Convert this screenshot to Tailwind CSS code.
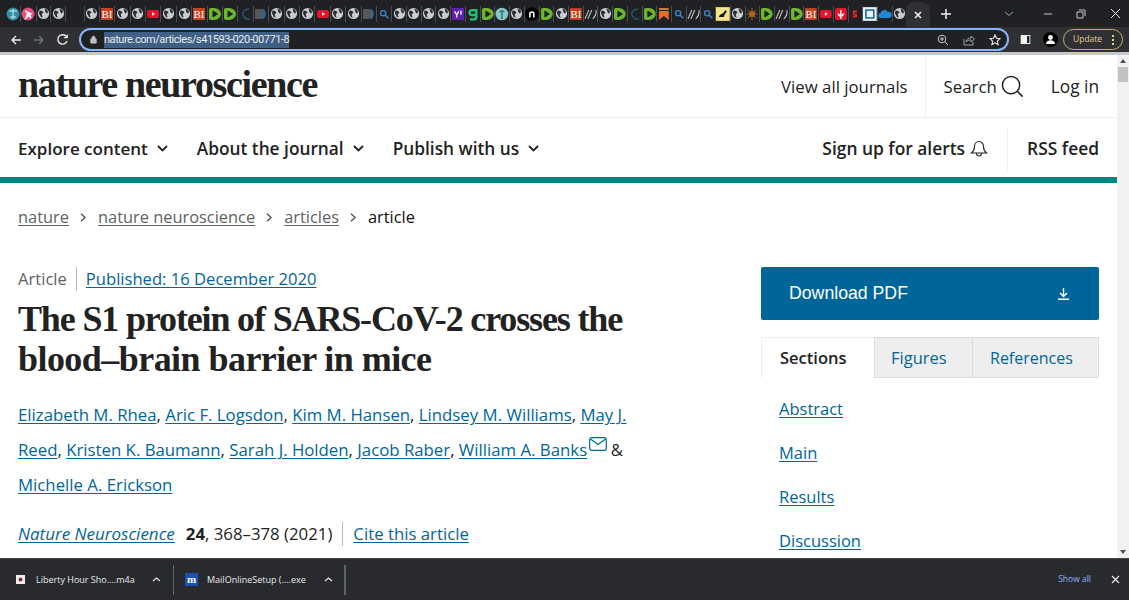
<!DOCTYPE html>
<html lang="en">
<head>
<meta charset="UTF-8" />
<title>The S1 protein of SARS-CoV-2 crosses the blood-brain barrier in mice</title>
<script src="https://cdn.jsdelivr.net/npm/@tailwindcss/browser@4"></script>
</head>
<body class="h-[600px] w-[1129px] overflow-hidden bg-white font-['Open_Sans',sans-serif] text-[#222]">
<!-- icon sprites -->
<svg class="hidden">
	<symbol id="g" viewBox="0 0 14 14"><circle cx="7" cy="7" r="6" fill="#c9ccd0"/><path d="M3 3.5l3 1 1 2-2 1 1 4-2-1-2-4zM8 2l3 1 1 3-2 1-1-2z" fill="#2a2c30"/></symbol>
	<symbol id="bi" viewBox="0 0 14 14"><rect x="1" y="1" width="12" height="12" fill="#c8431f"/><text x="7" y="11" text-anchor="middle" font-family="Liberation Serif" font-size="11" fill="#fff">BI</text></symbol>
	<symbol id="yt" viewBox="0 0 14 14"><rect x="1" y="3" width="12" height="8" rx="2" fill="#e8132a"/><path d="M6 5.2l3 1.8-3 1.8z" fill="#fff"/></symbol>
	<symbol id="play" viewBox="0 0 14 14"><path d="M1 3a2 2 0 012-2h3a7 6 0 010 12H3a2 2 0 01-2-2z" fill="#6cb52d"/><path d="M5 4l4.500 3L5 10z" fill="#1f2023" stroke="#1f2023"/></symbol>
	<symbol id="ph" viewBox="0 0 14 14"><path d="M10 2C6 2 3 5 4 8s4 5 7 4" fill="none" stroke="#1c5a70" stroke-width="1.500"/></symbol>
	<symbol id="d" viewBox="0 0 14 14"><path d="M1 2h5a5 5 0 010 10H1z" fill="#55585c"/><path d="M8 1.500c5 1 5 10 0 11 2-3 2-8 0-11z" fill="#2b6aa0"/></symbol>
	<symbol id="s" viewBox="0 0 14 14"><circle cx="6" cy="6" r="3" fill="none" stroke="#3a86c8" stroke-width="1.600"/><path d="M8.500 8.500L12 12" stroke="#3a86c8" stroke-width="1.800"/></symbol>
	<symbol id="sl" viewBox="0 0 14 14"><path d="M1 12L5 3M4 12L8 3M9 12c3-3 4-6 3-9" fill="none" stroke="#c8c8c8" stroke-width="1.100"/></symbol>
</svg>

<!-- tab strip -->
<div class="flex h-[27px] items-center bg-[#202124] pl-[6px] text-[#dfe1e5]">
	<div class="flex w-[60px] shrink-0 [&>span]:h-[16px] [&>span]:items-center [&>span]:border-r [&>span]:border-[#4a4c50]">
		<span class="flex w-[15px] justify-center"><svg class="size-[14px]" viewBox="0 0 14 14"><circle cx="7" cy="7" r="6.500" fill="#2f8fa3"/><path d="M3 4h8M7 2v10M4 10h6" stroke="#d9eef2"/></svg></span>
		<span class="flex w-[16px] justify-center"><svg class="size-[14px]" viewBox="0 0 14 14"><circle cx="7" cy="7" r="6.500" fill="#e84f7d"/><path d="M4 4l6 3-5 4 2-5 3 5" stroke="#fff" stroke-width="1.500" fill="none"/></svg></span>
		<span class="flex w-[15px] justify-center"><svg class="size-[13px]"><use href="#g"/></svg></span>
		<span class="flex w-[15px] justify-center"><svg class="size-[13px]"><use href="#g"/></svg></span>
	</div>
	<div class="ml-[17.500px] flex shrink-0 [&>span]:h-[16px] [&>span]:items-center [&>span]:border-l [&>span]:border-[#4a4c50]">
		<span class="flex w-[15.400px] justify-center"><svg class="size-[13px]"><use href="#g"/></svg></span>
		<span class="flex w-[15.400px] justify-center"><svg class="size-[14px]"><use href="#bi"/></svg></span>
		<span class="flex w-[15.400px] justify-center"><svg class="size-[13px]"><use href="#g"/></svg></span>
		<span class="flex w-[15.400px] justify-center"><svg class="size-[13px]"><use href="#g"/></svg></span>
		<span class="flex w-[15.400px] justify-center"><svg class="size-[14px]"><use href="#yt"/></svg></span>
		<span class="flex w-[15.400px] justify-center"><svg class="size-[13px]"><use href="#g"/></svg></span>
		<span class="flex w-[15.400px] justify-center"><svg class="size-[13px]"><use href="#g"/></svg></span>
		<span class="flex w-[15.400px] justify-center"><svg class="size-[14px]"><use href="#bi"/></svg></span>
		<span class="flex w-[15.400px] justify-center"><svg class="size-[14px]"><use href="#play"/></svg></span>
		<span class="flex w-[15.400px] justify-center"><svg class="size-[14px]"><use href="#play"/></svg></span>
		<span class="flex w-[15.400px] justify-center"><svg class="size-[14px]"><use href="#ph"/></svg></span>
		<span class="flex w-[15.400px] justify-center"><svg class="size-[14px]"><use href="#d"/></svg></span>
		<span class="flex w-[15.400px] justify-center"><svg class="size-[13px]"><use href="#g"/></svg></span>
		<span class="flex w-[15.400px] justify-center"><svg class="size-[13px]"><use href="#g"/></svg></span>
		<span class="flex w-[15.400px] justify-center"><svg class="size-[13px]"><use href="#g"/></svg></span>
		<span class="flex w-[15.400px] justify-center"><svg class="size-[14px]"><use href="#yt"/></svg></span>
		<span class="flex w-[15.400px] justify-center"><svg class="size-[13px]"><use href="#g"/></svg></span>
		<span class="flex w-[15.400px] justify-center"><svg class="size-[13px]"><use href="#g"/></svg></span>
		<span class="flex w-[15.400px] justify-center"><svg class="size-[14px]"><use href="#d"/></svg></span>
		<span class="flex w-[15.400px] justify-center"><svg class="size-[12px]"><use href="#s"/></svg></span>
	</div>
	<div class="flex shrink-0 [&>span]:h-[16px] [&>span]:items-center [&>span]:border-l [&>span]:border-[#4a4c50]">
		<span class="flex w-[14.720px] justify-center"><svg class="size-[13px]"><use href="#g"/></svg></span>
		<span class="flex w-[14.720px] justify-center"><svg class="size-[13px]"><use href="#g"/></svg></span>
		<span class="flex w-[14.720px] justify-center"><svg class="size-[13px]"><use href="#g"/></svg></span>
		<span class="flex w-[14.720px] justify-center"><svg class="size-[13px]"><use href="#g"/></svg></span>
		<span class="flex w-[14.720px] justify-center"><svg class="size-[12px]" viewBox="0 0 14 14"><rect width="14" height="14" fill="#5f1fb5"/><path d="M3 4l2.500 4L8 4M5.500 8v3M10.500 3v5" stroke="#fff" stroke-width="1.500" fill="none"/></svg></span>
		<span class="flex w-[14.720px] justify-center"><svg class="size-[14px]" viewBox="0 0 14 14"><path d="M10.500 3H6a2.500 2.500 0 000 5h4.500V2M10.500 8v2.500a2.500 2.500 0 01-2.500 2H4" fill="none" stroke="#1fc37a" stroke-width="2.400"/></svg></span>
		<span class="flex w-[14.720px] justify-center"><svg class="size-[14px]"><use href="#play"/></svg></span>
		<span class="flex w-[14.720px] justify-center"><svg class="size-[14px]" viewBox="0 0 14 14"><circle cx="7" cy="7" r="6.500" fill="#8cc4c8"/><path d="M7 3v9M4.500 4.500h5" stroke="#2c7f86" stroke-width="1.600"/></svg></span>
		<span class="flex w-[14.720px] justify-center"><svg class="size-[13px]"><use href="#g"/></svg></span>
		<span class="flex w-[14.720px] justify-center"><svg class="size-[14px]" viewBox="0 0 14 14"><circle cx="7" cy="7" r="7" fill="#000"/><path d="M5 10.500V5.500M5 7a2 2 0 014 0v3.500" stroke="#fff" stroke-width="1.600" fill="none"/></svg></span>
		<span class="flex w-[14.720px] justify-center"><svg class="size-[14px]"><use href="#play"/></svg></span>
		<span class="flex w-[14.720px] justify-center"><svg class="size-[13px]"><use href="#g"/></svg></span>
		<span class="flex w-[14.720px] justify-center"><svg class="size-[14px]"><use href="#bi"/></svg></span>
		<span class="flex w-[14.720px] justify-center"><svg class="size-[14px]"><use href="#sl"/></svg></span>
		<span class="flex w-[14.720px] justify-center"><svg class="size-[13px]"><use href="#g"/></svg></span>
		<span class="flex w-[14.720px] justify-center"><svg class="size-[14px]"><use href="#play"/></svg></span>
		<span class="flex w-[14.720px] justify-center"><svg class="size-[14px]"><use href="#ph"/></svg></span>
		<span class="flex w-[14.720px] justify-center"><svg class="size-[14px]"><use href="#play"/></svg></span>
		<span class="flex w-[14.720px] justify-center"><svg class="size-[14px]" viewBox="0 0 14 14"><path d="M2 1h10v2H2zM2 4h10v9L7 9l-5 4z" fill="#ea6a2a"/></svg></span>
		<span class="flex w-[14.720px] justify-center"><svg class="size-[12px]"><use href="#s"/></svg></span>
		<span class="flex w-[14.720px] justify-center"><svg class="size-[14px]"><use href="#sl"/></svg></span>
		<span class="flex w-[14.720px] justify-center"><svg class="size-[12px]"><use href="#s"/></svg></span>
		<span class="flex w-[14.720px] justify-center"><svg class="size-[14px]" viewBox="0 0 14 14"><rect width="14" height="14" fill="#f5e58a"/><path d="M3 10c1-4 4-2 5-5l2-2 1 2-2 2-1 3z" fill="#111"/></svg></span>
		<span class="flex w-[14.720px] justify-center"><svg class="size-[13px]"><use href="#g"/></svg></span>
		<span class="flex w-[14.720px] justify-center"><svg class="size-[12px]" viewBox="0 0 14 14"><circle cx="7" cy="7" r="3.500" fill="#b3681c"/><path d="M7 0v14M0 7h14M2 2l10 10M12 2L2 12" stroke="#b3681c"/></svg></span>
		<span class="flex w-[14.720px] justify-center"><svg class="size-[14px]"><use href="#play"/></svg></span>
		<span class="flex w-[14.720px] justify-center"><svg class="size-[14px]"><use href="#sl"/></svg></span>
		<span class="flex w-[14.720px] justify-center"><svg class="size-[14px]"><use href="#play"/></svg></span>
		<span class="flex w-[14.720px] justify-center"><svg class="size-[14px]"><use href="#bi"/></svg></span>
		<span class="flex w-[14.720px] justify-center"><svg class="size-[14px]"><use href="#yt"/></svg></span>
		<span class="flex w-[14.720px] justify-center"><svg class="size-[14px]" viewBox="0 0 14 14"><rect x="1" y="1" width="12" height="12" rx="2" fill="#e0182d"/><path d="M7 3v5M4.500 6.500a2.500 2.500 0 005 0M7 9v3" stroke="#fff" stroke-width="1.400" fill="none"/></svg></span>
		<span class="flex w-[14.720px] justify-center"><svg class="size-[10px]" viewBox="0 0 14 14"><path d="M4 2h6v3H7v2h3v5H4V9h3V8H4z" fill="#d8262f"/></svg></span>
		<span class="flex w-[14.720px] justify-center"><svg class="size-[14px]" viewBox="0 0 14 14"><rect width="14" height="14" fill="#e8f3fa"/><rect x="3" y="3" width="8" height="8" fill="none" stroke="#1b6a9c" stroke-width="1.600"/></svg></span>
		<span class="flex w-[14.720px] justify-center"><svg class="size-[14px]" viewBox="0 0 14 14"><path d="M3 11a2.500 2.500 0 01-.5-5A4 4 0 0110 5a3 3 0 012 6z" fill="#1f86d8"/></svg></span>
		<span class="flex w-[14.720px] justify-center"><svg class="size-[13px]"><use href="#g"/></svg></span>
	</div>
	<!-- active tab -->
	<div class="flex h-[25px] w-[24px] shrink-0 items-center justify-center self-end rounded-t-lg bg-[#2f3033]">
		<svg class="size-[10px]" viewBox="0 0 10 10"><path d="M2 2l6 6M8 2L2 8" stroke="#f1f3f4" stroke-width="1.500"/></svg>
	</div>
	<svg class="ml-[10px] size-[12px] shrink-0" viewBox="0 0 12 12"><path d="M6 1v10M1 6h10" stroke="#f1f3f4" stroke-width="1.500"/></svg>
	<svg class="ml-[52px] size-[10px] shrink-0" viewBox="0 0 10 10"><path d="M1 3l4 3.500L9 3" stroke="#9aa0a6" fill="none"/></svg>
	<svg class="ml-[29px] size-[10px] shrink-0" viewBox="0 0 10 10"><path d="M1 5h8" stroke="#c8c8c8"/></svg>
	<svg class="ml-[23px] size-[10px] shrink-0" viewBox="0 0 10 10"><path d="M3 1h6v6M1 3h6v6H1z" stroke="#c8c8c8" fill="none"/></svg>
	<svg class="ml-[24px] size-[11px] shrink-0" viewBox="0 0 11 11"><path d="M1 1l9 9M10 1l-9 9" stroke="#e8e8e8"/></svg>
</div>

<!-- toolbar -->
<div class="flex h-[25px] items-center bg-[#2f3033]">
	<svg class="ml-[10px] size-[12px] shrink-0" viewBox="0 0 12 12"><path d="M11 6H2M6 2L2 6l4 4" stroke="#e8eaed" stroke-width="1.400" fill="none"/></svg>
	<svg class="ml-[11px] size-[12px] shrink-0" viewBox="0 0 12 12"><path d="M1 6h9M6 2l4 4-4 4" stroke="#6f7276" stroke-width="1.400" fill="none"/></svg>
	<svg class="ml-[11px] size-[13px] shrink-0" viewBox="0 0 13 13"><path d="M11 8A4.700 4.700 0 1 1 9.800 3" stroke="#e8eaed" stroke-width="1.400" fill="none"/><path d="M11.800 1v4.200H7.600z" fill="#e8eaed"/></svg>
	<div class="ml-[10px] flex h-[23px] w-[930px] shrink-0 items-center rounded-full border-2 border-[#8ab4f8] bg-[#202124] pl-[8px] pr-[6px]">
		<svg class="size-[9px] shrink-0" viewBox="0 0 10 10"><path d="M2 4.500h6V9H2zM3.300 4.500V3a1.700 1.700 0 013.400 0v1.500" fill="#bdc1c6" stroke="#bdc1c6"/></svg>
		<span class="ml-[6px] bg-[#3f5f85] font-['Roboto',sans-serif] text-[11px] leading-[16px] tracking-[-.45px] text-[#e8eaed]">nature.com/articles/s41593-020-00771-8</span>
		<svg class="ml-auto size-[12px] shrink-0" viewBox="0 0 12 12"><circle cx="5" cy="5" r="3.800" stroke="#c4c7c5" fill="none"/><path d="M8 8l3 3M3 5h4M5 3v4" stroke="#c4c7c5"/></svg>
		<svg class="ml-[14px] size-[12px] shrink-0" viewBox="0 0 12 12"><path d="M1 5v6h9V8M3 8c0-3 3-4 5-4V2l3.500 3L8 8V6C6 6 4 6.500 3 8z" stroke="#9aa0a6" fill="none"/></svg>
		<svg class="ml-[14px] size-[12px] shrink-0" viewBox="0 0 12 12"><path d="M6 1l1.500 3.300 3.500.4-2.600 2.400.7 3.500L6 8.800 2.900 10.600l.7-3.500L1 4.700l3.500-.4z" stroke="#e8eaed" stroke-width="1.100" fill="none"/></svg>
	</div>
	<svg class="ml-[11px] size-[11px] shrink-0" viewBox="0 0 11 11"><rect x=".7" y="1" width="9.600" height="9" fill="#f1f3f4"/><rect x="7" y="2" width="2.400" height="7" fill="#202124"/></svg>
	<span class="ml-[12px] flex size-[15px] shrink-0 items-center justify-center rounded-full bg-[#000]"><svg class="size-[11px]" viewBox="0 0 11 11"><circle cx="5.500" cy="3.500" r="2.400" fill="#fff"/><path d="M1 10c0-5 9-5 9 0z" fill="#fff"/></svg></span>
	<div class="ml-[5px] flex h-[21px] w-[60px] shrink-0 items-center rounded-full border border-[#c5ad6a] pl-[9px] text-[8.500px] text-[#e6cf8a]">Update<span class="ml-[10px] flex flex-col gap-[2px]"><i class="block size-[2px] bg-[#f0d060]"></i><i class="block size-[2px] bg-[#f0d060]"></i><i class="block size-[2px] bg-[#f0d060]"></i></span></div>
</div>
<div class="h-[3px] bg-[#c6c8ca]"></div>

<div class="flex h-[503px] overflow-hidden">
	<div class="w-[1117px] shrink-0">
		<!-- journal header -->
		<header class="flex h-[63px] items-stretch border-b border-[#eee] pl-[18px] pr-[18px]">
			<a class="mt-[7px] font-['Liberation_Serif',serif] text-[38px] leading-[44px] font-bold tracking-[-1.350px] text-[#222]">nature neuroscience</a>
			<div class="ml-auto flex items-center text-[16.800px] text-[#222]">
				<span class="pt-[2px]">View all journals</span>
				<span class="ml-[17px] h-full border-l border-[#eee]"></span>
				<span class="ml-[18px] pt-[2px]">Search</span>
				<svg class="ml-[4px] size-[23px]" viewBox="0 0 24 24"><circle cx="10.500" cy="10.500" r="9" fill="none" stroke="#222" stroke-width="1.500"/><path d="M17 17l5.500 5.500" stroke="#222" stroke-width="1.700"/></svg>
				<span class="ml-[27px] pt-[2px] text-[17.300px]">Log in</span>
			</div>
		</header>
		<!-- nav -->
		<nav class="flex h-[59px] items-center pt-[2px] pl-[18px] pr-[18px] text-[17.300px] font-semibold text-[#222]">
			<span class="text-[17px]">Explore content</span>
			<svg class="ml-[9px] size-[11px]" viewBox="0 0 11 11"><path d="M1 3l4.500 4.500L10 3" stroke="#222" stroke-width="1.800" fill="none"/></svg>
			<span class="ml-[29px]">About the journal</span>
			<svg class="ml-[9px] size-[11px]" viewBox="0 0 11 11"><path d="M1 3l4.500 4.500L10 3" stroke="#222" stroke-width="1.800" fill="none"/></svg>
			<span class="ml-[29px]">Publish with us</span>
			<svg class="ml-[9px] size-[11px]" viewBox="0 0 11 11"><path d="M1 3l4.500 4.500L10 3" stroke="#222" stroke-width="1.800" fill="none"/></svg>
			<span class="ml-auto text-[17.400px]">Sign up for alerts</span>
			<svg class="ml-[5px] size-[18px]" viewBox="0 0 18 18"><path d="M9 1.500c-3 0-4.500 2.500-4.500 5 0 3-1 5-3 6.500h15c-2-1.500-3-3.500-3-6.500 0-2.500-1.500-5-4.500-5zM6.500 13.500a2.500 2.500 0 005 0" stroke="#222" stroke-width="1.100" fill="none"/></svg>
			<span class="ml-[19px] h-[42px] border-l border-[#eee]"></span>
			<span class="ml-[19px] text-[17.400px]">RSS feed</span>
		</nav>
		<div class="h-[6px] bg-[#00857f]"></div>

		<!-- breadcrumbs -->
		<div class="mt-[22px] flex h-[25px] items-center gap-[10px] pl-[18px] text-[16.400px] text-[#626262]">
			<a class="underline underline-offset-2">nature</a>
			<svg class="size-[9px]" viewBox="0 0 9 9"><path d="M2 .8l4 3.700-4 3.700" stroke="#555" stroke-width="1.400" fill="none"/></svg>
			<a class="underline underline-offset-2">nature neuroscience</a>
			<svg class="size-[9px]" viewBox="0 0 9 9"><path d="M2 .8l4 3.700-4 3.700" stroke="#555" stroke-width="1.400" fill="none"/></svg>
			<a class="underline underline-offset-2">articles</a>
			<svg class="size-[9px]" viewBox="0 0 9 9"><path d="M2 .8l4 3.700-4 3.700" stroke="#555" stroke-width="1.400" fill="none"/></svg>
			<span class="text-[#111]">article</span>
		</div>

		<div class="flex pl-[18px] pr-[18px]">
			<!-- article head -->
			<article class="w-[625px] shrink-0 pt-[36px]">
				<div class="flex h-[26px] items-center text-[16.600px] text-[#626262]">
					<span>Article</span>
					<span class="ml-[9px] h-[24px] border-l border-[#bbb]"></span>
					<a class="ml-[9px] text-[#006699] underline underline-offset-2">Published: 16 December 2020</a>
				</div>
				<h1 class="mt-[7px] font-['Liberation_Serif',serif] text-[36px] leading-[40px] font-bold tracking-[-1.150px] text-[#222]">The S1 protein of SARS-CoV-2 crosses the <span class="tracking-[-.55px]">blood–brain barrier in mice</span></h1>
				<div class="mt-[18px] text-[16.800px] leading-[35px] text-[#222]">
					<a class="text-[#006699] underline underline-offset-2">Elizabeth M. Rhea</a>, <a class="text-[#006699] underline underline-offset-2">Aric F. Logsdon</a>, <a class="text-[#006699] underline underline-offset-2">Kim M. Hansen</a>, <a class="text-[#006699] underline underline-offset-2">Lindsey M. Williams</a>, <a class="text-[#006699] underline underline-offset-2">May J.</a> <a class="text-[#006699] underline underline-offset-2">Reed</a>, <a class="text-[#006699] underline underline-offset-2">Kristen K. Baumann</a>, <a class="text-[#006699] underline underline-offset-2">Sarah J. Holden</a>, <a class="text-[#006699] underline underline-offset-2">Jacob Raber</a>, <a class="text-[#006699] underline underline-offset-2">William A. Banks</a>
					<svg class="ml-[-3px] inline-block size-[18px] align-[3px]" viewBox="0 0 18 14"><rect x=".7" y=".7" width="16.600" height="12.600" rx="2" fill="none" stroke="#006699" stroke-width="1.200"/><path d="M1.500 2l7.500 5.500L16.500 2" fill="none" stroke="#006699" stroke-width="1.200"/></svg>
					&amp; <a class="text-[#006699] underline underline-offset-2">Michelle A. Erickson</a>
				</div>
				<div class="mt-[19px] flex h-[26px] items-center text-[16.800px]">
					<a class="text-[17px] text-[#006699] italic underline underline-offset-2">Nature Neuroscience</a>
					<span class="ml-[11px]"><b class="font-bold">24</b>, 368–378 (2021)</span>
					<span class="ml-[10px] h-[24px] border-l border-[#bbb]"></span>
					<a class="ml-[10px] text-[#006699] underline underline-offset-2">Cite this article</a>
				</div>
			</article>
			<!-- sidebar -->
			<aside class="ml-auto w-[338px] shrink-0 pt-[37px]">
				<a class="flex h-[53px] items-center justify-between rounded-[2px] bg-[#006699] pl-[28px] pr-[29px] font-['Liberation_Sans',sans-serif] text-[17.700px] text-white">
					Download PDF
					<svg class="size-[13px]" viewBox="0 0 13 13"><path d="M6.500 1v8M3 6l3.500 3.500L10 6M1 12.300h11" stroke="#fff" stroke-width="1.400" fill="none"/></svg>
				</a>
				<div class="mt-[17px] flex h-[41px] text-[16.500px]">
					<span class="flex w-[113px] items-center border-t border-l border-[#eee] pt-[1px] pl-[18px] font-semibold text-[#222]">Sections</span>
					<span class="flex w-[99px] items-center border border-[#ddd] bg-[#eee] pt-[1px] pl-[16px] text-[#006699]">Figures</span>
					<span class="flex flex-1 items-center border border-l-0 border-[#ddd] bg-[#eee] pt-[1px] pl-[17px] text-[16px] text-[#006699]">References</span>
				</div>
				<ul class="mt-[18px] flex flex-col gap-[18px] pl-[18px] text-[16.500px] leading-[26px] text-[#006699] underline underline-offset-2">
					<li>Abstract</li>
					<li>Main</li>
					<li>Results</li>
					<li>Discussion</li>
				</ul>
			</aside>
		</div>
	</div>
	<!-- scrollbar -->
	<div class="flex w-[12px] shrink-0 flex-col items-center bg-[#f1f1f1]">
		<svg class="mt-[3px] size-[6px]" viewBox="0 0 6 6"><path d="M3 1l3 4H0z" fill="#505050"/></svg>
		<div class="mt-[3px] h-[15px] w-[10px] bg-[#c1c1c1]"></div>
		<svg class="mt-auto mb-[3px] size-[6px]" viewBox="0 0 6 6"><path d="M3 5l3-4H0z" fill="#505050"/></svg>
	</div>
</div>

<!-- downloads shelf -->
<footer class="flex h-[42px] items-center border-t border-[#444] bg-[#292a2d] text-[9px] whitespace-nowrap text-[#e8eaed]">
	<svg class="ml-[16px] size-[9px] shrink-0" viewBox="0 0 9 9"><rect width="9" height="9" fill="#eee"/><circle cx="4.500" cy="4.500" r="2" fill="#8c2a2a"/></svg>
	<span class="ml-[11px] w-[115px]">Liberty Hour Sho....m4a</span>
	<svg class="ml-[1px] size-[9px] shrink-0" viewBox="0 0 9 9"><path d="M1 6l3.500-3L8 6" stroke="#e8eaed" stroke-width="1.200" fill="none"/></svg>
	<span class="ml-[12px] h-[30px] border-l border-[#5f6368]"></span>
	<span class="ml-[11px] flex size-[13px] shrink-0 items-center justify-center bg-[#1b4fb5] font-['Liberation_Serif',serif] text-[11px] leading-none font-bold text-white">m</span>
	<span class="ml-[9px] w-[116px]">MailOnlineSetup (....exe</span>
	<svg class="ml-[1px] size-[9px] shrink-0" viewBox="0 0 9 9"><path d="M1 6l3.500-3L8 6" stroke="#e8eaed" stroke-width="1.200" fill="none"/></svg>
	<span class="ml-[11px] h-[30px] border-l-2 border-[#5f6368]"></span>
	<span class="ml-auto text-[8.500px] text-[#8ab4f8]">Show all</span>
	<svg class="mr-[9px] ml-[20px] size-[9px] shrink-0" viewBox="0 0 9 9"><path d="M1 1l7 7M8 1L1 8" stroke="#e8eaed" stroke-width="1.200"/></svg>
</footer>
</body>
</html>
